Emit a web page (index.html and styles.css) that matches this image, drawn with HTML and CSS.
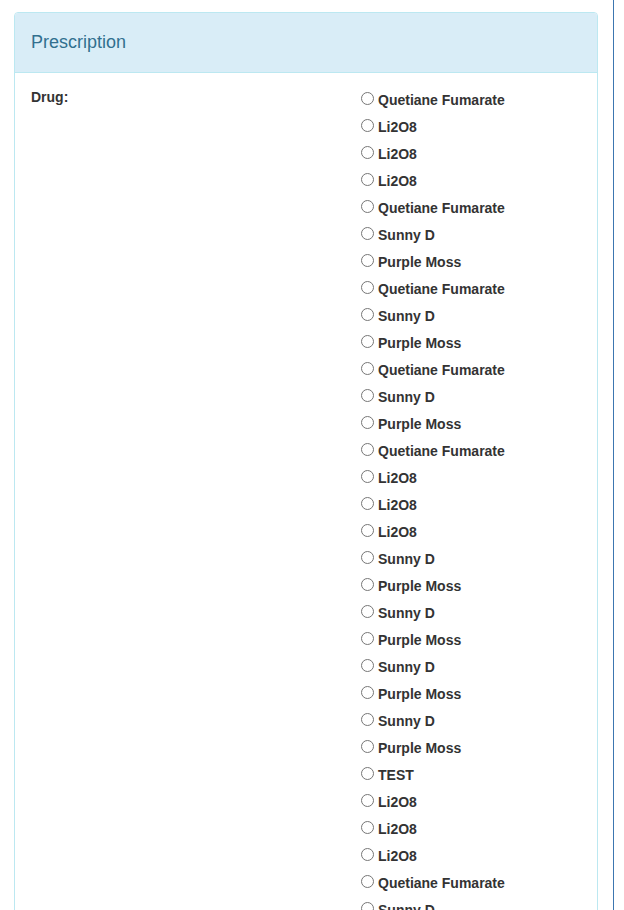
FILE: index.html
```html
<!DOCTYPE html>
<html>
<head>
<meta charset="utf-8">
<link rel="stylesheet" href="styles.css">
</head>
<body>
<div class="page">
  <div class="panel">
    <div class="panel-heading">Prescription</div>
    <div class="panel-body">
      <div class="label">Drug:</div>
      <div class="options">
        <label class="opt"><input type="radio" name="drug"><span>Quetiane Fumarate</span></label>
        <label class="opt"><input type="radio" name="drug"><span>Li2O8</span></label>
        <label class="opt"><input type="radio" name="drug"><span>Li2O8</span></label>
        <label class="opt"><input type="radio" name="drug"><span>Li2O8</span></label>
        <label class="opt"><input type="radio" name="drug"><span>Quetiane Fumarate</span></label>
        <label class="opt"><input type="radio" name="drug"><span>Sunny D</span></label>
        <label class="opt"><input type="radio" name="drug"><span>Purple Moss</span></label>
        <label class="opt"><input type="radio" name="drug"><span>Quetiane Fumarate</span></label>
        <label class="opt"><input type="radio" name="drug"><span>Sunny D</span></label>
        <label class="opt"><input type="radio" name="drug"><span>Purple Moss</span></label>
        <label class="opt"><input type="radio" name="drug"><span>Quetiane Fumarate</span></label>
        <label class="opt"><input type="radio" name="drug"><span>Sunny D</span></label>
        <label class="opt"><input type="radio" name="drug"><span>Purple Moss</span></label>
        <label class="opt"><input type="radio" name="drug"><span>Quetiane Fumarate</span></label>
        <label class="opt"><input type="radio" name="drug"><span>Li2O8</span></label>
        <label class="opt"><input type="radio" name="drug"><span>Li2O8</span></label>
        <label class="opt"><input type="radio" name="drug"><span>Li2O8</span></label>
        <label class="opt"><input type="radio" name="drug"><span>Sunny D</span></label>
        <label class="opt"><input type="radio" name="drug"><span>Purple Moss</span></label>
        <label class="opt"><input type="radio" name="drug"><span>Sunny D</span></label>
        <label class="opt"><input type="radio" name="drug"><span>Purple Moss</span></label>
        <label class="opt"><input type="radio" name="drug"><span>Sunny D</span></label>
        <label class="opt"><input type="radio" name="drug"><span>Purple Moss</span></label>
        <label class="opt"><input type="radio" name="drug"><span>Sunny D</span></label>
        <label class="opt"><input type="radio" name="drug"><span>Purple Moss</span></label>
        <label class="opt"><input type="radio" name="drug"><span>TEST</span></label>
        <label class="opt"><input type="radio" name="drug"><span>Li2O8</span></label>
        <label class="opt"><input type="radio" name="drug"><span>Li2O8</span></label>
        <label class="opt"><input type="radio" name="drug"><span>Li2O8</span></label>
        <label class="opt"><input type="radio" name="drug"><span>Quetiane Fumarate</span></label>
        <label class="opt"><input type="radio" name="drug"><span>Sunny D</span></label>
        <label class="opt"><input type="radio" name="drug"><span>Purple Moss</span></label>
      </div>
    </div>
  </div>
  <div class="rule"></div>
</div>
</body>
</html>
```
FILE: styles.css
```css
html, body {
  margin: 0;
  padding: 0;
  background: #fff;
  overflow: hidden;
}
body {
  font-family: "Liberation Sans", Arial, sans-serif;
  font-size: 14px;
  color: #333;
}
.page {
  display: flex;
  align-items: flex-start;
  padding: 12px 0 0 14px;
  height: 898px;
}
.panel {
  width: 584px;
  box-sizing: border-box;
  border: 1px solid #bce8f1;
  border-radius: 4px;
  background: #fff;
  flex: none;
}
.panel-heading {
  background: #d9edf7;
  color: #31708f;
  border-bottom: 1px solid #bce8f1;
  border-radius: 3px 3px 0 0;
  font-size: 18px;
  line-height: 20px;
  padding: 19px 16px 20px;
}
.panel-body {
  display: flex;
  padding: 13px 16px 0;
}
.label {
  width: 330px;
  flex: none;
  font-weight: bold;
  line-height: 20px;
  margin-top: 1px;
}
.options {
  display: flex;
  flex-direction: column;
}
.opt {
  display: flex;
  align-items: center;
  height: 27px;
  font-weight: bold;
  color: #333;
}
.opt input {
  margin: 0 4px 2px 0;
  width: 13px;
  height: 13px;
}
.rule {
  width: 1px;
  height: 910px;
  background: #3c76b0;
  margin: -12px 0 0 15px;
  flex: none;
}
```
